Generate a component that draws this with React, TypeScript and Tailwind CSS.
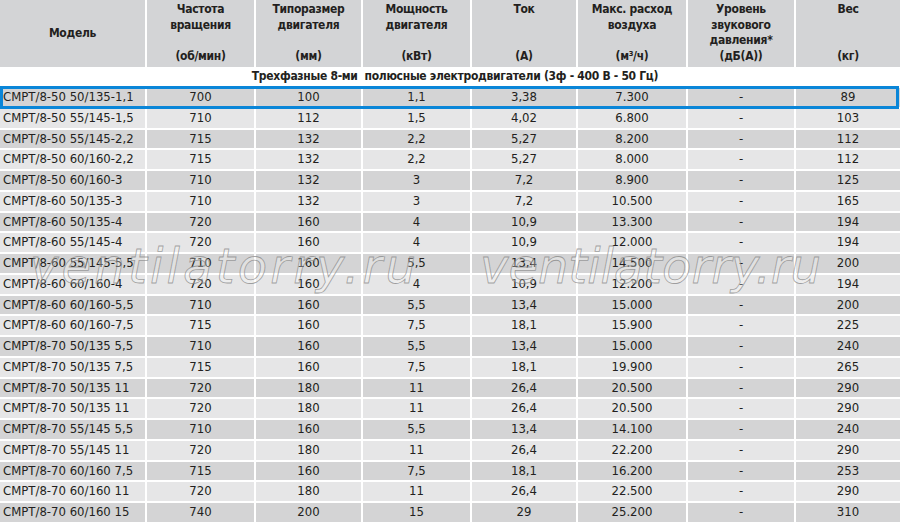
const rows: string[][] = [
  ['СМРТ/8-50 50/135-1,1', '700', '100', '1,1', '3,38', '7.300', '-', '89'],
  ['СМРТ/8-50 55/145-1,5', '710', '112', '1,5', '4,02', '6.800', '-', '103'],
  ['СМРТ/8-50 55/145-2,2', '715', '132', '2,2', '5,27', '8.200', '-', '112'],
  ['СМРТ/8-50 60/160-2,2', '715', '132', '2,2', '5,27', '8.000', '-', '112'],
  ['СМРТ/8-50 60/160-3', '710', '132', '3', '7,2', '8.900', '-', '125'],
  ['СМРТ/8-60 50/135-3', '710', '132', '3', '7,2', '10.500', '-', '165'],
  ['СМРТ/8-60 50/135-4', '720', '160', '4', '10,9', '13.300', '-', '194'],
  ['СМРТ/8-60 55/145-4', '720', '160', '4', '10,9', '12.000', '-', '194'],
  ['СМРТ/8-60 55/145-5,5', '710', '160', '5,5', '13,4', '14.500', '-', '200'],
  ['СМРТ/8-60 60/160-4', '720', '160', '4', '10,9', '12.200', '-', '194'],
  ['СМРТ/8-60 60/160-5,5', '710', '160', '5,5', '13,4', '15.000', '-', '200'],
  ['СМРТ/8-60 60/160-7,5', '715', '160', '7,5', '18,1', '15.900', '-', '225'],
  ['СМРТ/8-70 50/135 5,5', '710', '160', '5,5', '13,4', '15.000', '-', '240'],
  ['СМРТ/8-70 50/135 7,5', '715', '160', '7,5', '18,1', '19.900', '-', '265'],
  ['СМРТ/8-70 50/135 11', '720', '180', '11', '26,4', '20.500', '-', '290'],
  ['СМРТ/8-70 50/135 11', '720', '180', '11', '26,4', '20.500', '-', '290'],
  ['СМРТ/8-70 55/145 5,5', '710', '160', '5,5', '13,4', '14.100', '-', '240'],
  ['СМРТ/8-70 55/145 11', '720', '180', '11', '26,4', '22.200', '-', '290'],
  ['СМРТ/8-70 60/160 7,5', '715', '160', '7,5', '18,1', '16.200', '-', '253'],
  ['СМРТ/8-70 60/160 11', '720', '180', '11', '26,4', '22.500', '-', '290'],
  ['СМРТ/8-70 60/160 15', '740', '200', '15', '29', '25.200', '-', '310'],
];

const cols = 'grid grid-cols-[145px_107px_105px_107px_104px_108px_106px_1fr] gap-x-[2px]';

const headers: { top: string[]; unit: string }[] = [
  { top: ['Частота', 'вращения'], unit: '(об/мин)' },
  { top: ['Типоразмер', 'двигателя'], unit: '(мм)' },
  { top: ['Мощность', 'двигателя'], unit: '(кВт)' },
  { top: ['Ток'], unit: '(A)' },
  { top: ['Макс. расход', 'воздуха'], unit: '(м³/ч)' },
  { top: ['Уровень', 'звукового', 'давления*'], unit: '(дБ(А))' },
  { top: ['Вес'], unit: '(кг)' },
];

function Watermark({ className }: { className: string }) {
  return (
    <div
      className={`pointer-events-none absolute font-['DejaVu_Sans',sans-serif] italic text-[48px] leading-none text-[rgba(255,255,255,0.3)] [-webkit-text-stroke:0.8px_rgba(125,125,125,0.7)] ${className}`}
    >
      ventilatorry.ru
    </div>
  );
}

export default function App() {
  return (
    <div className="relative w-[900px] h-[524px] overflow-hidden bg-white text-[#231f20] font-['Liberation_Sans_Narrow','DejaVu_Sans_Condensed',Roboto,sans-serif] text-[13px]">
      <div className="flex flex-col gap-y-[2px]">
        {/* header */}
        <div className={`${cols} h-[63px] font-bold text-[12px] tracking-[-0.3px] leading-[15.5px]`}>
          <div className="bg-[#d3d4d6] flex items-center justify-center">Модель</div>
          {headers.map((h, i) => (
            <div key={i} className="bg-[#d3d4d6] flex flex-col items-center justify-between pt-[2px] pb-[3px] text-center">
              <div>
                {h.top.map((t) => (
                  <div key={t}>{t}</div>
                ))}
              </div>
              <div>{h.unit}</div>
            </div>
          ))}
        </div>

        {/* section title */}
        <div className="h-[21px] flex items-center justify-center font-bold text-[12px] tracking-[-0.3px] pl-[10px]">
          Трехфазные 8-ми&nbsp; полюсные электродвигатели (3ф - 400 В - 50 Гц)
        </div>

        {rows.map((r, i) => (
          <div key={i} className="relative">
            <div className={`${cols} h-[18.75px] leading-[18.75px]`}>
              {r.map((c, j) => (
                <div
                  key={j}
                  className={`${j === 0 ? 'pl-[3px] text-left' : 'text-center'} ${
                    i % 2 === 0 ? 'bg-[#d4d4d5]' : 'bg-[#e6e6e7]'
                  } whitespace-nowrap`}
                >
                  {c}
                </div>
              ))}
            </div>
            {i === 0 && (
              <div className="absolute left-0 right-[1px] top-[-2px] bottom-[-2px] border-[3px] border-[#0a86d8]" />
            )}
          </div>
        ))}
      </div>

      <Watermark className="left-[30px] top-[242px] tracking-[3.2px]" />
      <Watermark className="left-[480px] top-[242px] tracking-[0px]" />
    </div>
  );
}
